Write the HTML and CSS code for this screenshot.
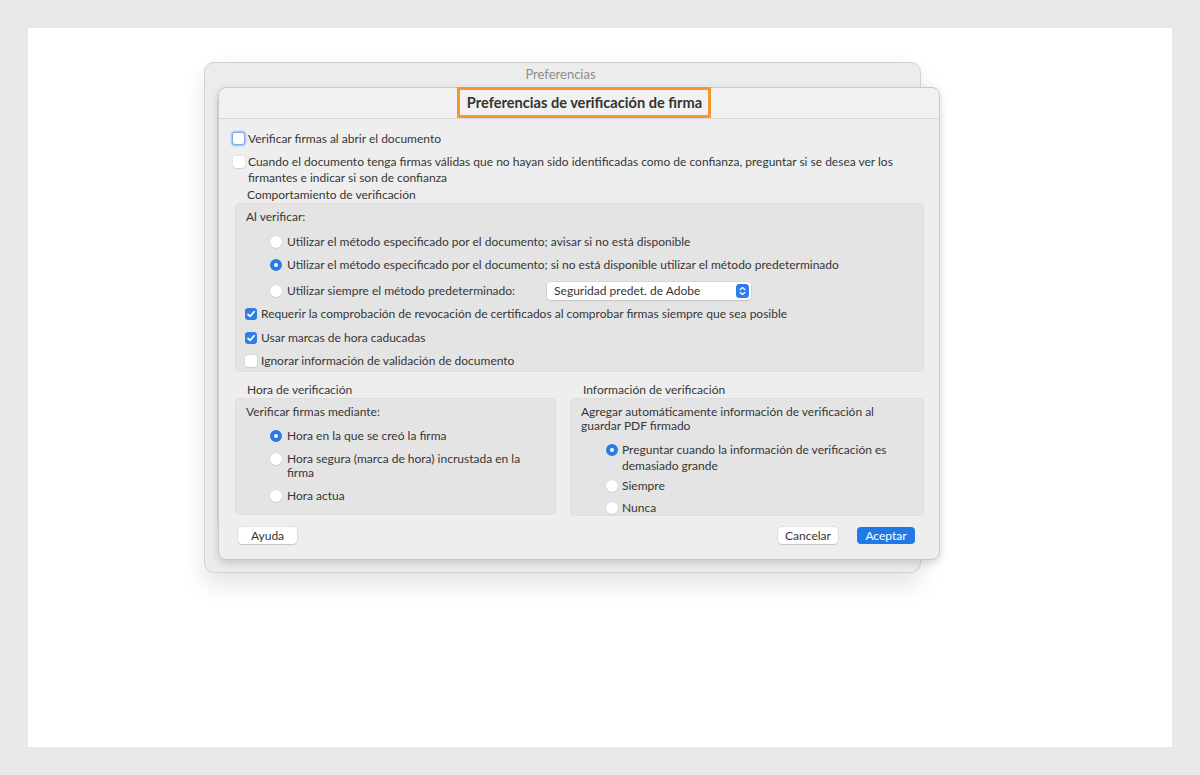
FILE: index.html
```html
<!DOCTYPE html>
<html lang="es">
<head>
<meta charset="utf-8">
<title>Preferencias de verificación de firma</title>
<link rel="stylesheet" href="styles.css">
</head>
<body>
<div class="canvas">
  <div class="win-back">
    <div class="back-title">Preferencias</div>
    <div class="back-body"><div class="back-rail"></div></div>
  </div>

  <div class="win-front">
    <div class="titlebar">
      <div class="title-hl">Preferencias de verificación de firma</div>
    </div>
    <div class="content">
      <div class="row top1">
        <span class="cb focus"></span><span class="lbl">Verificar firmas al abrir el documento</span>
      </div>
      <div class="row top2">
        <span class="cb"></span><span class="lbl wrap16">Cuando el documento tenga firmas válidas que no hayan sido identificadas como de confianza, preguntar si se desea ver los firmantes e indicar si son de confianza</span>
      </div>
      <div class="group-label gl1">Comportamiento de verificación</div>
      <div class="box box-main">
        <div class="box-head">Al verificar:</div>
        <div class="row radio-row r1"><span class="rd"></span><span class="lbl">Utilizar el método especificado por el documento; avisar si no está disponible</span></div>
        <div class="row radio-row r2"><span class="rd on"></span><span class="lbl">Utilizar el método especificado por el documento; si no está disponible utilizar el método predeterminado</span></div>
        <div class="row radio-row r3"><span class="rd"></span><span class="lbl">Utilizar siempre el método predeterminado:</span>
          <div class="select"><span>Seguridad predet. de Adobe</span>
            <svg class="stepper" width="13" height="14" viewBox="0 0 13 14"><rect x="0" y="0" width="13" height="14" rx="3.5" fill="#2d7cf0"/><path d="M4.2 5.6 L6.5 3.6 L8.8 5.6" fill="none" stroke="#fff" stroke-width="1.3" stroke-linecap="round" stroke-linejoin="round"/><path d="M4.2 8.4 L6.5 10.4 L8.8 8.4" fill="none" stroke="#fff" stroke-width="1.3" stroke-linecap="round" stroke-linejoin="round"/></svg>
          </div>
        </div>
        <div class="row check-row c1"><span class="cb on"><svg width="12" height="12" viewBox="0 0 12 12"><path d="M3 6.3 L5.1 8.4 L9.1 3.7" fill="none" stroke="#fff" stroke-width="1.7" stroke-linecap="round" stroke-linejoin="round"/></svg></span><span class="lbl">Requerir la comprobación de revocación de certificados al comprobar firmas siempre que sea posible</span></div>
        <div class="row check-row c2"><span class="cb on"><svg width="12" height="12" viewBox="0 0 12 12"><path d="M3 6.3 L5.1 8.4 L9.1 3.7" fill="none" stroke="#fff" stroke-width="1.7" stroke-linecap="round" stroke-linejoin="round"/></svg></span><span class="lbl">Usar marcas de hora caducadas</span></div>
        <div class="row check-row c3"><span class="cb"></span><span class="lbl">Ignorar información de validación de documento</span></div>
      </div>

      <div class="cols">
        <div class="col col-left">
          <div class="group-label gl2">Hora de verificación</div>
          <div class="box box-left">
            <div class="box-head">Verificar firmas mediante:</div>
            <div class="row radio-row l1"><span class="rd on"></span><span class="lbl">Hora en la que se creó la firma</span></div>
            <div class="row radio-row l2"><span class="rd"></span><span class="lbl wrap14">Hora segura (marca de hora) incrustada en la firma</span></div>
            <div class="row radio-row l3"><span class="rd"></span><span class="lbl">Hora actua</span></div>
          </div>
        </div>
        <div class="col col-right">
          <div class="group-label gl3">Información de verificación</div>
          <div class="box box-right">
            <div class="box-head wrap14">Agregar automáticamente información de verificación al guardar PDF firmado</div>
            <div class="row radio-row q1"><span class="rd on"></span><span class="lbl wrap16">Preguntar cuando la información de verificación es demasiado grande</span></div>
            <div class="row radio-row q2"><span class="rd"></span><span class="lbl">Siempre</span></div>
            <div class="row radio-row q3"><span class="rd"></span><span class="lbl">Nunca</span></div>
          </div>
        </div>
      </div>

      <div class="buttons">
        <button class="btn b-help">Ayuda</button>
        <div class="spacer"></div>
        <button class="btn b-cancel">Cancelar</button>
        <button class="btn primary">Aceptar</button>
      </div>
    </div>
  </div>
</div>
</body>
</html>
```

FILE: styles.css
```css
* { box-sizing: border-box; }
html, body { margin: 0; padding: 0; }
body {
  background: #e8e8e8;
  padding: 28px;
  font-family: "Lato", "Open Sans", sans-serif;
  color: #363636;
  font-size: 12px;
  line-height: 16px;
}
.canvas {
  position: relative;
  width: 1144px;
  height: 719px;
  background: #ffffff;
}

/* back window */
.win-back {
  position: absolute;
  left: 176px;
  top: 34px;
  width: 717px;
  height: 511px;
  background: #ececec;
  border: 1px solid #d2d2d2;
  border-radius: 10px;
  box-shadow: 0 12px 24px rgba(0,0,0,0.11);
  display: flex;
  flex-direction: column;
}
.back-title {
  height: 25px;
  text-align: center;
  color: #8d8d8d;
  font-size: 13px;
  line-height: 23px;
  padding-right: 4px;
}
.back-body { flex: 1; padding: 12px 0 50px 12px; display: flex; }
.back-rail { width: 1px; background: #dadada; }

/* front window */
.win-front {
  position: absolute;
  left: 190px;
  top: 59px;
  width: 722px;
  height: 473px;
  background: #eeeeee;
  border: 1px solid #c9c9c9;
  border-radius: 8px;
  box-shadow: 0 3px 8px rgba(0,0,0,0.16);
  display: flex;
  flex-direction: column;
}
.titlebar {
  height: 31px;
  border-bottom: 1px solid #d7d7d7;
  background: #f1f1f1;
  border-radius: 8px 8px 0 0;
  display: flex;
  justify-content: center;
  padding-left: 10px;
}
.title-hl {
  height: 31px;
  margin-top: -1px;
  border: 3px solid #f3982c;
  padding: 0 6px 0 7px;
  font-weight: 700;
  font-size: 14.6px;
  line-height: 25px;
  color: #333;
}
.content {
  flex: 1;
  padding: 12px 15px 0 13px;
  display: flex;
  flex-direction: column;
}

.row { display: flex; align-items: flex-start; }
.lbl { display: block; }
.wrap16 { line-height: 16px; }
.wrap14 { line-height: 14px; }

/* checkboxes */
.cb {
  flex: none;
  width: 12px;
  height: 12px;
  margin: 2px 4px 0 1px;
  border-radius: 3px;
  background: #ffffff;
  box-shadow: 0 0 0 0.5px rgba(0,0,0,0.08), 0 1px 1px rgba(0,0,0,0.08);
  display: flex;
}
.cb.focus {
  width: 13px;
  height: 13px;
  margin: 1px 3px 0 0;
  border: 1.5px solid #7ea3f0;
  box-shadow: 0 0 0 1.5px rgba(120,160,240,0.45);
}
.cb.on { background: #2f7de6; box-shadow: none; }

/* radios */
.rd {
  flex: none;
  width: 12px;
  height: 12px;
  margin: 2px 5px 0 0;
  border-radius: 50%;
  background: #ffffff;
  box-shadow: 0 0 0 0.5px rgba(0,0,0,0.06), 0 1px 1px rgba(0,0,0,0.08);
}
.rd.on {
  background: #ffffff;
  border: 4px solid #2a7ae6;
  box-shadow: none;
}

.top1 { margin-left: 0; }
.top2 { margin-top: 7px; margin-left: 0; }
.top2 .cb { margin-right: 3px; }
.group-label { padding-left: 15px; color: #363636; }
.gl1 { margin-top: 1px; }

.box {
  background: #e4e4e4;
  border-radius: 5px;
  box-shadow: inset 0 0 0 1px #dedede;
}
.box-main {
  margin: 0 0 0 3px;
  padding: 6px 10px 3px 11px;
}
.radio-row { padding-left: 24px; }
.r1 { margin-top: 9px; }
.r2 { margin-top: 7px; }
.r3 { margin-top: 8px; align-items: center; height: 20px; }
.r3 .rd { margin-top: 0; }
.check-row { padding-left: 0; }
.check-row .cb { margin-left: -1px; }
.c1 { margin-top: 5px; }
.c2 { margin-top: 8px; }
.c3 { margin-top: 7px; }

.select {
  margin-left: 32px;
  width: 204px;
  height: 18px;
  background: #ffffff;
  border-radius: 4px;
  box-shadow: 0 0 0 0.5px rgba(0,0,0,0.1), 0 1px 2px rgba(0,0,0,0.1);
  display: flex;
  align-items: center;
  justify-content: space-between;
  padding: 0 2px 0 7px;
  line-height: 16px;
}
.stepper { display: block; }

.cols {
  display: flex;
  gap: 14px;
  margin-top: 10px;
  margin-left: 3px;
}
.col-left { width: 321px; }
.col-right { width: 354px; }
.gl2 { padding-left: 12px; }
.gl3 { padding-left: 13px; }
.box-left { padding: 6px 10px 11px 11px; height: 117px; }
.box-left .radio-row { padding-left: 24px; }
.l1 { margin-top: 8px; }
.l2 { margin-top: 7px; }
.l2 .lbl { padding-top: 1px; }
.l3 { margin-top: 8px; }
.box-right { padding: 7px 10px 0 11px; height: 118px; overflow: hidden; }
.box-right .radio-row { padding-left: 25px; }
.box-right .rd { margin-right: 4px; }
.q1 { margin-top: 9px; }
.q2 { margin-top: 4px; }
.q3 { margin-top: 6px; }

.buttons {
  display: flex;
  align-items: center;
  margin-top: 11px;
  padding-left: 5px;
}
.spacer { flex: 1; }
.btn {
  font-family: inherit;
  font-size: 12px;
  line-height: 15px;
  height: 17px;
  padding: 0;
  border: none;
  border-radius: 4px;
  background: #ffffff;
  color: #363636;
  text-align: center;
  box-shadow: 0 0 0 0.5px rgba(0,0,0,0.12), 0 1px 1px rgba(0,0,0,0.12);
}
.b-help { width: 59px; margin-left: 1px; }
.b-cancel { width: 60px; }
.btn.primary { width: 58px; margin-left: 19px; background: #1f7ae8; color: #ffffff; box-shadow: none; margin-right: 9px; }
```
